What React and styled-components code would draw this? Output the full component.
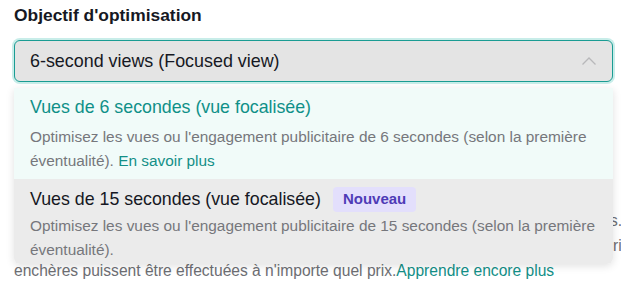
import React from "react";
import styled, { createGlobalStyle } from "styled-components";

const GlobalStyle = createGlobalStyle`
  body {
    margin: 0;
    background: #fff;
    font-family: "Liberation Sans", Arial, sans-serif;
  }
`;

const Page = styled.div`
  width: 621px;
  height: 304px;
  overflow: hidden;
  padding: 4px 0 0 14px;
  box-sizing: border-box;
`;

const Label = styled.div`
  font-size: 17.4px;
  font-weight: 700;
  color: #161823;
  line-height: 22px;
`;

const Field = styled.div`
  position: relative;
  width: 599px;
  margin-top: 14px;
`;

const SelectBox = styled.div`
  display: flex;
  align-items: center;
  justify-content: space-between;
  height: 42px;
  box-sizing: border-box;
  padding: 0 15px 0 15px;
  background: #e4e4e4;
  border: 1.5px solid #1a9c93;
  border-radius: 6px;
  box-shadow: 0 0 0 2px #c8ede9;
  font-size: 17.9px;
  color: #161823;
`;

const Behind = styled.div`
  margin-top: 126px;
  font-size: 15.6px;
  line-height: 25px;
  color: #6d6e73;
`;

const BehindLine = styled.div`
  white-space: nowrap;
  padding-left: ${(p) => p.indent || 0}px;
`;

const Link = styled.span`
  color: #138f87;
`;

const Menu = styled.div`
  position: absolute;
  top: 48px;
  left: 0;
  width: 599px;
  border-radius: 0 0 6px 6px;
  overflow: hidden;
  box-shadow: 0 2px 8px rgba(0, 0, 0, 0.12);
  z-index: 2;
`;

const Option = styled.div`
  padding: ${(p) => (p.active ? "6px 16px 6px" : "7px 16px 2px")};
  background: ${(p) => (p.active ? "#f1fbf9" : "#ebebeb")};
`;

const OptionTitle = styled.div`
  display: flex;
  align-items: center;
  gap: 12px;
  font-size: 17.8px;
  line-height: 26px;
  color: ${(p) => (p.active ? "#0f9088" : "#161823")};
`;

const Badge = styled.span`
  display: inline-flex;
  align-items: center;
  height: 25px;
  padding: 0 10px;
  border-radius: 4px;
  background: #e3dffc;
  color: #4e3bb6;
  font-size: 15px;
  font-weight: 700;
`;

const OptionDesc = styled.div`
  font-size: 15.4px;
  line-height: 24px;
  color: #76777c;
  margin-top: ${(p) => (p.active ? 5 : 2)}px;
  white-space: nowrap;
`;

const Chevron = () => (
  <svg width="16" height="10" viewBox="0 0 16 10" fill="none">
    <path d="M1.5 8.5L8 2l6.5 6.5" stroke="#b8b8ba" strokeWidth="1.3" />
  </svg>
);

export default function App() {
  return (
    <Page>
      <GlobalStyle />
      <Label>Objectif d'optimisation</Label>
      <Field>
        <SelectBox>
          <span>6-second views (Focused view)</span>
          <Chevron />
        </SelectBox>
        <Behind>
          <BehindLine indent={596}>s.</BehindLine>
          <BehindLine indent={599}>ri</BehindLine>
          <BehindLine>
            enchères puissent être effectuées à n'importe quel prix.
            <Link>Apprendre encore plus</Link>
          </BehindLine>
        </Behind>
        <Menu>
          <Option active>
            <OptionTitle active>Vues de 6 secondes (vue focalisée)</OptionTitle>
            <OptionDesc active>
              Optimisez les vues ou l'engagement publicitaire de 6 secondes (selon la première
              <br />
              éventualité). <Link>En savoir plus</Link>
            </OptionDesc>
          </Option>
          <Option>
            <OptionTitle>
              Vues de 15 secondes (vue focalisée)
              <Badge>Nouveau</Badge>
            </OptionTitle>
            <OptionDesc>
              Optimisez les vues ou l'engagement publicitaire de 15 secondes (selon la première
              <br />
              éventualité).
            </OptionDesc>
          </Option>
        </Menu>
      </Field>
    </Page>
  );
}
